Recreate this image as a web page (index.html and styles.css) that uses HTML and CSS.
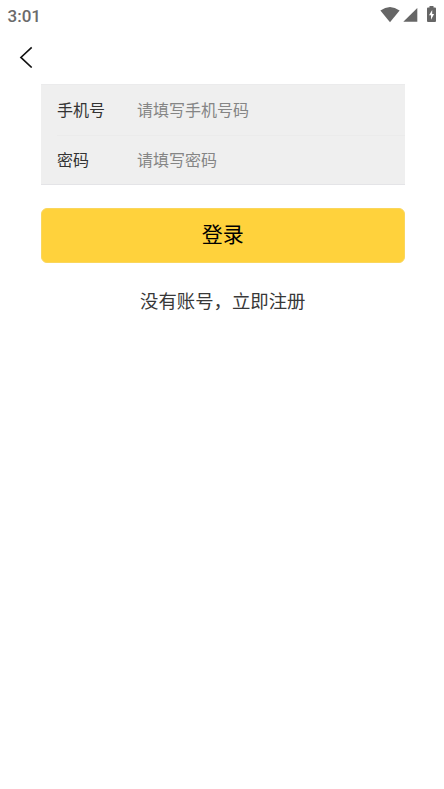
FILE: index.html
```
<!DOCTYPE html>
<html lang="zh-CN">
<head>
<meta charset="utf-8">
<title>登录</title>
<link rel="stylesheet" href="styles.css">
</head>
<body>
<div class="status">
  <span class="time">3:01</span>
  <div class="status-icons">
    <svg class="wifi" width="20" height="16" viewBox="0 0 20 16"><path d="M.4 3.6Q10-3.6 19.6 3.6L10 15.2Z"/></svg>
    <svg class="signal" width="15" height="14" viewBox="0 0 15 14"><path d="M14.3 0V13.8H.3Z"/></svg>
    <svg class="battery" width="9" height="16" viewBox="0 0 9 16"><path fill-rule="evenodd" d="M2.5 0H6.5V1.5H8Q9 1.5 9 2.5V15Q9 16 8 16H1Q0 16 0 15V2.5Q0 1.5 1 1.5H2.5ZM5.2 4L2 9.3H4V13.7L7.1 8H5.2Z"/></svg>
  </div>
</div>
<header class="nav">
  <a class="back" href="#" aria-label="返回"><svg width="14" height="22" viewBox="0 0 14 22"><path d="M12.7 1.3L1.9 11.4L12.7 21.5"/></svg></a>
</header>
<main>
  <form>
    <div class="fields">
      <label class="field"><span class="label">手机号</span><input type="tel" placeholder="请填写手机号码"></label>
      <label class="field"><span class="label">密码</span><input type="password" placeholder="请填写密码"></label>
    </div>
    <button class="login" type="button">登录</button>
  </form>
  <a class="register" href="#">没有账号，立即注册</a>
</main>
</body>
</html>
```
FILE: styles.css
```
* { box-sizing: border-box; }
body {
  margin: 0;
  background: #fff;
  color: #333;
  font-family: "Noto Sans CJK SC", sans-serif;
}
.status {
  height: 32px;
  padding: 0 8.5px 0 7.5px;
  display: flex;
  justify-content: space-between;
  color: #6b6b6b;
}
.time {
  font: 500 17px/32px Roboto, sans-serif;
}
.status-icons {
  display: flex;
  align-items: flex-start;
  padding-top: 6px;
  fill: #666;
}
.wifi { margin-top: 1px; }
.signal { margin: 2px 9px 0 3px; }
.nav {
  height: 52px;
  padding: 14px 19px;
}
.back { display: block; width: 14px; }
.back svg {
  display: block;
  fill: none;
  stroke: #111;
  stroke-width: 1.6;
}
main { padding: 0 39.5px 0 41px; }
.fields {
  height: 101px;
  background: #efefef;
  border-top: 1px solid #ebebec;
  border-bottom: 1px solid #e4e4e7;
}
.field {
  height: 50px;
  margin-left: 16px;
  padding-bottom: 2px;
  display: flex;
  align-items: center;
  font-size: 16px;
  line-height: 24px;
}
.field + .field {
  height: 49px;
  border-top: 1px solid #ebebeb;
}
.label { width: 80px; }
input {
  flex: 1;
  min-width: 0;
  height: 24px;
  padding: 0;
  border: 0;
  outline: 0;
  background: none;
  font: inherit;
}
input::placeholder { color: #858585; }
.login {
  display: block;
  width: 100%;
  height: 55px;
  margin-top: 23px;
  padding: 0 0 6px;
  border: 1px solid #fad65c;
  border-radius: 6px;
  background: #ffd23c;
  color: #000;
  font: 21px/30px "Noto Sans CJK SC", sans-serif;
}
.register {
  display: block;
  margin-top: 23px;
  color: #383838;
  font-size: 18.4px;
  line-height: 28px;
  text-align: center;
  text-decoration: none;
}
```
